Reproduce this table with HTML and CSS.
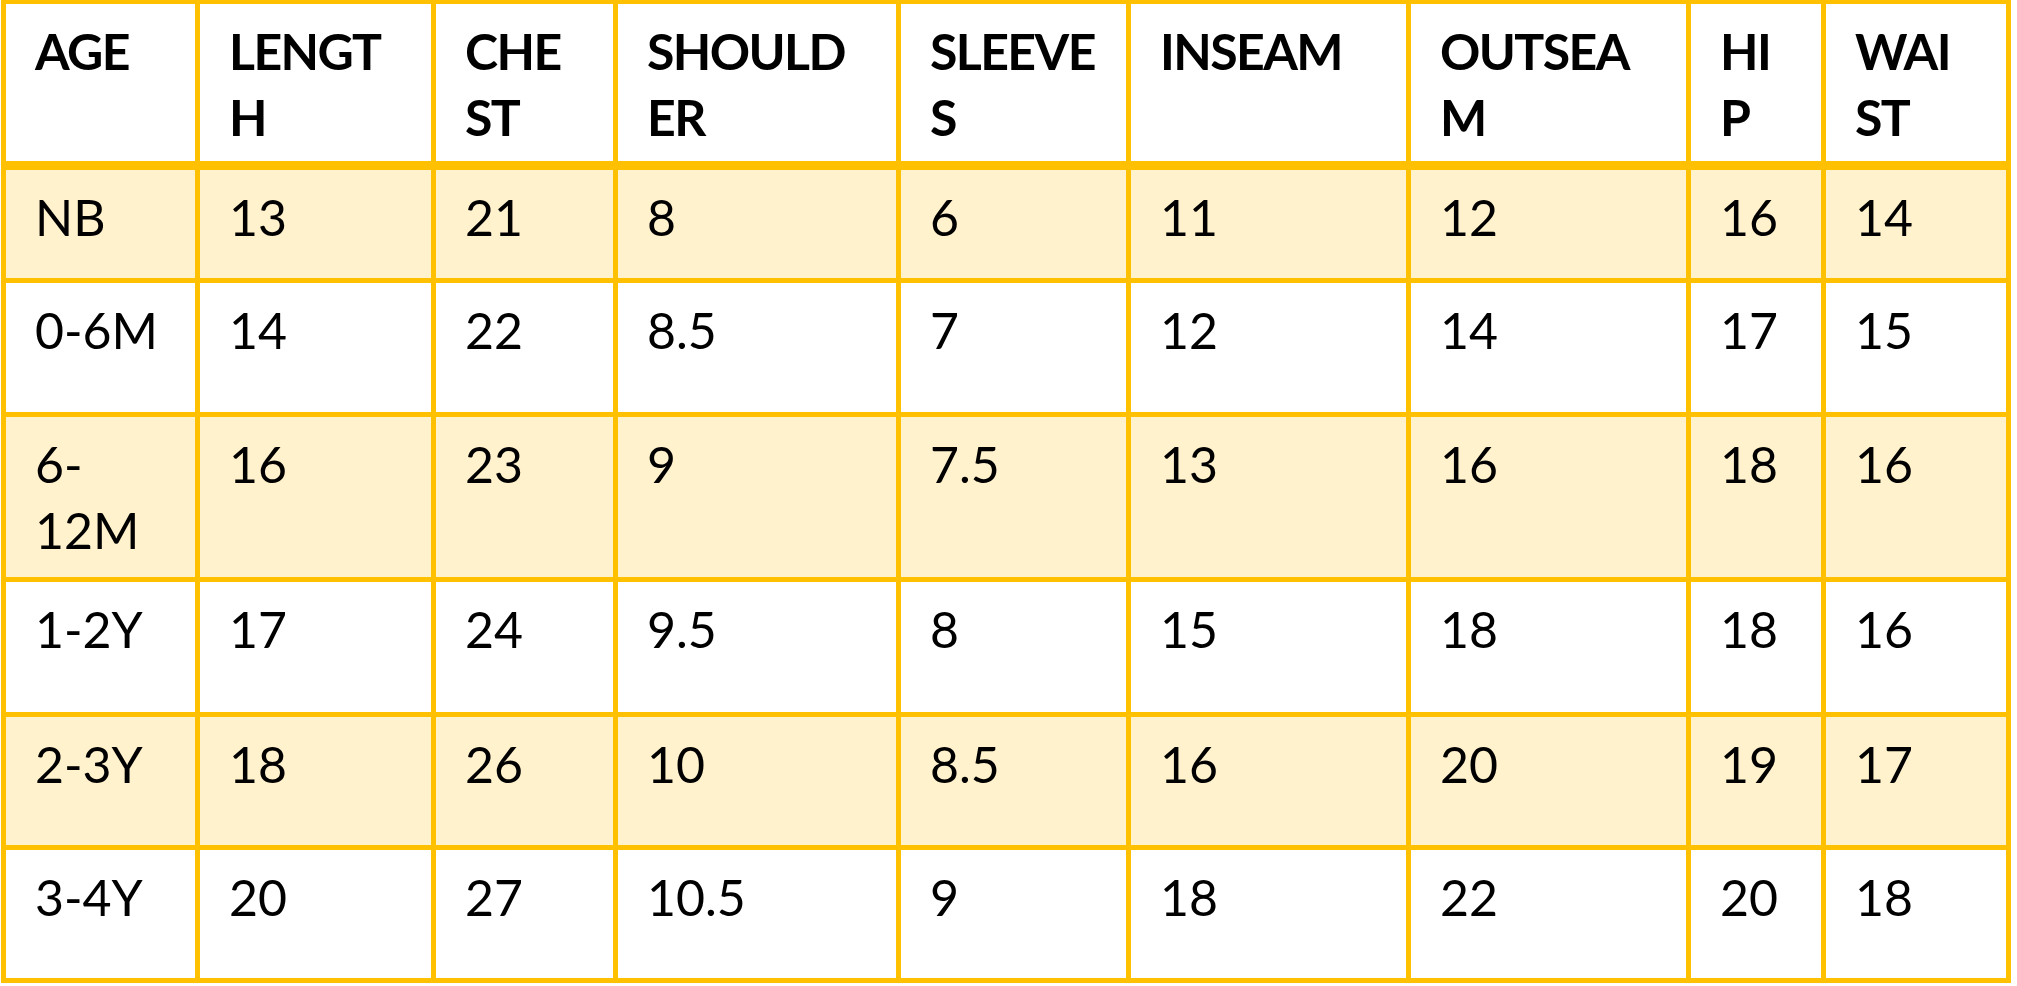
FILE: index.html
```html
<!DOCTYPE html>
<html lang="en">
<head>
<meta charset="utf-8">
<title>Size Chart</title>
<link rel="stylesheet" href="styles.css">
</head>
<body>
<div class="chart">
  <div class="cell head">AGE</div>
  <div class="cell head">LENGT<br>H</div>
  <div class="cell head">CHE<br>ST</div>
  <div class="cell head">SHOULD<br>ER</div>
  <div class="cell head">SLEEVE<br>S</div>
  <div class="cell head">INSEAM</div>
  <div class="cell head">OUTSEA<br>M</div>
  <div class="cell head">HI<br>P</div>
  <div class="cell head">WAI<br>ST</div>

  <div class="cell band">NB</div>
  <div class="cell band">13</div>
  <div class="cell band">21</div>
  <div class="cell band">8</div>
  <div class="cell band">6</div>
  <div class="cell band">11</div>
  <div class="cell band">12</div>
  <div class="cell band">16</div>
  <div class="cell band">14</div>

  <div class="cell">0-6M</div>
  <div class="cell">14</div>
  <div class="cell">22</div>
  <div class="cell">8.5</div>
  <div class="cell">7</div>
  <div class="cell">12</div>
  <div class="cell">14</div>
  <div class="cell">17</div>
  <div class="cell">15</div>

  <div class="cell band">6-<br>12M</div>
  <div class="cell band">16</div>
  <div class="cell band">23</div>
  <div class="cell band">9</div>
  <div class="cell band">7.5</div>
  <div class="cell band">13</div>
  <div class="cell band">16</div>
  <div class="cell band">18</div>
  <div class="cell band">16</div>

  <div class="cell">1-2Y</div>
  <div class="cell">17</div>
  <div class="cell">24</div>
  <div class="cell">9.5</div>
  <div class="cell">8</div>
  <div class="cell">15</div>
  <div class="cell">18</div>
  <div class="cell">18</div>
  <div class="cell">16</div>

  <div class="cell band">2-3Y</div>
  <div class="cell band">18</div>
  <div class="cell band">26</div>
  <div class="cell band">10</div>
  <div class="cell band">8.5</div>
  <div class="cell band">16</div>
  <div class="cell band">20</div>
  <div class="cell band">19</div>
  <div class="cell band">17</div>

  <div class="cell">3-4Y</div>
  <div class="cell">20</div>
  <div class="cell">27</div>
  <div class="cell">10.5</div>
  <div class="cell">9</div>
  <div class="cell">18</div>
  <div class="cell">22</div>
  <div class="cell">20</div>
  <div class="cell">18</div>
</div>
</body>
</html>
```

FILE: styles.css
```css
html, body {
  margin: 0;
  padding: 0;
  background: #ffffff;
}

.chart {
  display: grid;
  width: max-content;
  margin-left: 1px;
  padding: 4px 5px 5px 5px;
  gap: 5px;
  background: #ffc000;
  grid-template-columns: 189px 231px 177px 278px 225px 275px 275px 130px 180px;
  grid-template-rows: 161px 108px 129px 160px 130px 128px 128px;
  font-family: Lato, "Open Sans", sans-serif;
  font-size: 50px;
  line-height: 66px;
  color: #000000;
}

.cell {
  background: #ffffff;
  padding: 14px 0 0 29px;
  white-space: nowrap;
  box-sizing: border-box;
}

.band {
  background: #fff2cc;
}

.head {
  font-weight: 700;
  letter-spacing: -1.6px;
  border-bottom: 4px solid #ffc000;
}
```
